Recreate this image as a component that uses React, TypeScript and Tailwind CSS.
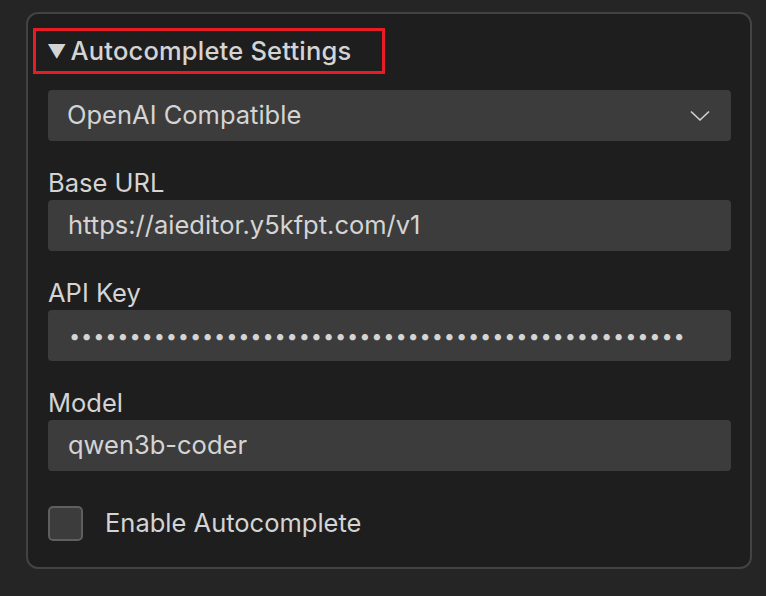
import React from 'react';

function Field({ label, children }: { label: string; children: React.ReactNode }) {
    return (
        <div className="flex flex-col">
            <div className="h-[28px] leading-[28px] mb-[3px]">{label}</div>
            {children}
        </div>
    );
}

export default function App() {
    const dots = '•'.repeat(51);
    return (
        <div
            className="w-[766px] h-[596px] bg-[#252525] pt-[12px] pl-[26px] text-[#d4d4d4] text-[25.5px]"
            style={{ fontFamily: 'Inter, "Noto Sans", sans-serif' }}
        >
            <div className="w-[726px] h-[557px] rounded-[12px] border-2 border-[#434343] bg-[#1e1e1e] pt-[14px] pl-[5px] pr-[19px]">
                <div className="w-[352px] h-[46px] border-[3px] border-[#e81c24] flex items-center pl-[11px] font-medium">
                    <span className="text-[19px] mr-[4px] leading-none">▼</span>
                    <span className="text-[25.5px] tracking-[0.2px]">Autocomplete Settings</span>
                </div>

                <div className="pl-[15px] pt-[16px] flex flex-col gap-[28px]">
                    <div className="h-[51px] rounded-[4px] bg-[#3c3c3c] flex items-center justify-between pl-[19px] pr-[21px]">
                        <span>OpenAI Compatible</span>
                        <svg width="20" height="12" viewBox="0 0 20 12" fill="none">
                            <path d="M1 1.5 L10 10 L19 1.5" stroke="#d4d4d4" strokeWidth="1.6" />
                        </svg>
                    </div>

                    <Field label="Base URL">
                        <div className="h-[51px] rounded-[4px] bg-[#3c3c3c] flex items-center pl-[20px]">
                            https://aieditor.y5kfpt.com/v1
                        </div>
                    </Field>

                    <Field label="API Key">
                        <div className="h-[51px] rounded-[4px] bg-[#3c3c3c] flex items-center pl-[21px] text-[20px] tracking-[0.84px]">
                            {dots}
                        </div>
                    </Field>

                    <Field label="Model">
                        <div className="h-[51px] rounded-[4px] bg-[#3c3c3c] flex items-center pl-[20px]">
                            qwen3b-coder
                        </div>
                    </Field>

                    <div className="flex items-center gap-[22px] mt-[5px]">
                        <div className="w-[35px] h-[35px] rounded-[5px] border-2 border-[#5f5f5f] bg-[#3c3c3c]" />
                        <span>Enable Autocomplete</span>
                    </div>
                </div>
            </div>
        </div>
    );
}
